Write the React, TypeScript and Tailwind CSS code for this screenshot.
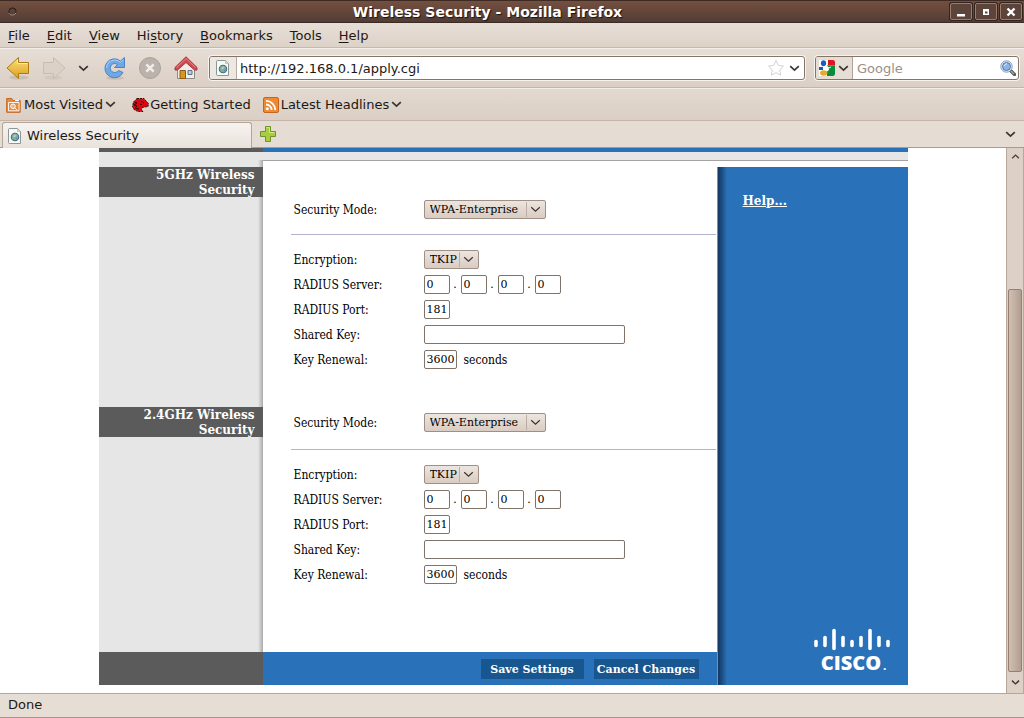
import React from "react";

const SERIF = "font-['DejaVu_Serif',serif]";
const SERIF_NARROW = "font-['DejaVu_Serif_Condensed','DejaVu_Serif',serif]";
const SANS = "font-['DejaVu_Sans',sans-serif]";

function Chevron({ up = false, thin = false, className = "text-[#3c3430]" }: { up?: boolean; thin?: boolean; className?: string }) {
  return (
    <svg width="11" height="7" viewBox="0 0 11 7" className={className} fill="none" stroke="currentColor" strokeWidth={thin ? 1.2 : 1.7} aria-hidden="true">
      <path d={up ? "M1.5 5.5 5.5 1.8 9.5 5.5" : "M1.2 1.2 5.5 5.2 9.8 1.2"} />
    </svg>
  );
}

function PageIcon() {
  return (
    <svg width="14" height="16" viewBox="0 0 14 16" className="shrink-0" aria-hidden="true">
      <path d="M1.5.5h8l3 3v12h-11q-1 0-1-1v-13q0-1 1-1z" fill="#f7f8f7" stroke="#8a9794" />
      <path d="M9.5.5v3h3z" fill="#d3dbd9" stroke="#a8b2b0" strokeWidth=".6" />
      <circle cx="7" cy="9" r="3.7" fill="#7fae9f" stroke="#4a6b80" strokeWidth="1.1" />
      <path d="M5 8q2-2.5 3.4-1L7.3 9.3 5.5 9z" fill="#a9d0aa" />
      <path d="M7.5 10l2-.8-.8 2.4z" fill="#5c86b0" />
    </svg>
  );
}

function TitleBar() {
  const box = "flex h-[17px] w-[22px] items-center justify-center rounded-[2px] border border-[#9b7c6d] bg-[#5c443a] shadow-[0_0_0_1px_#35241e]";
  return (
    <header className="flex h-[23px] items-center border-t border-b border-t-[#3f2923] border-b-[#3b2b25] bg-linear-to-b from-[#73503f] via-[#64463b] to-[#513d35] pr-[2px] pl-2">
      <svg width="9" height="9" viewBox="0 0 9 9" aria-hidden="true">
        <circle cx="4.5" cy="4.5" r="3.6" fill="#594239" stroke="#2c1c17" />
        <path d="M1 6.2a4 4 0 0 0 7-.3" fill="none" stroke="#b3998c" />
      </svg>
      <h1 className="flex-1 pl-2 text-center text-[14px] leading-[18px] font-bold text-white [text-shadow:1px_1px_1px_#20120c]">Wireless Security - Mozilla Firefox</h1>
      <div className="flex gap-[3px]">
        <button aria-label="Minimize" className={box}>
          <svg width="12" height="12" viewBox="0 0 12 12"><path d="M2 8h8v2.5H2z" fill="#fff" /></svg>
        </button>
        <button aria-label="Maximize" className={box}>
          <svg width="12" height="12" viewBox="0 0 12 12"><path d="M3 3h6v6H3zM5 5.5v2h2.500v-2z" fill="#fff" fillRule="evenodd" /></svg>
        </button>
        <button aria-label="Close" className={box}>
          <svg width="12" height="12" viewBox="0 0 12 12"><path d="m2.500 2.500 7 7m0-7-7 7" stroke="#fff" strokeWidth="2.400" /></svg>
        </button>
      </div>
    </header>
  );
}

const MENUS = [
  ["", "F", "ile"],
  ["", "E", "dit"],
  ["", "V", "iew"],
  ["Hi", "s", "tory"],
  ["", "B", "ookmarks"],
  ["", "T", "ools"],
  ["", "H", "elp"],
];

function MenuBar() {
  return (
    <nav className="flex h-[25px] items-center gap-[17px] border-b border-[#c9b9ad] bg-linear-to-b from-[#e7dfd7] to-[#ddd2c8] px-2 pt-px text-[13px]">
      {MENUS.map(([pre, key, post]) => (
        <button key={pre + key + post} className="leading-[18px]">
          {pre}<span className="underline underline-offset-2">{key}</span>{post}
        </button>
      ))}
    </nav>
  );
}

function BackIcon() {
  return (
    <svg width="24" height="24" viewBox="0 0 24 24">
      <ellipse cx="13" cy="21.500" rx="10" ry="2" fill="#b7a99d" opacity=".5" />
      <defs><linearGradient id="gold" x1="0" y1="0" x2="0" y2="1"><stop offset="0" stopColor="#fbe27d" /><stop offset="1" stopColor="#dc9e1b" /></linearGradient></defs>
      <path d="M12.500 1.500v5h10v11h-10v5L1 12z" fill="url(#gold)" stroke="#ae7b13" strokeLinejoin="round" />
      <path d="M11.500 4v3.500h10" fill="none" stroke="#fff2b0" opacity=".8" />
    </svg>
  );
}

function ForwardIcon() {
  return (
    <svg width="24" height="24" viewBox="0 0 24 24">
      <ellipse cx="11" cy="21.500" rx="9" ry="2" fill="#c6b9ae" opacity=".4" />
      <path d="M11.500 1.500v5h-10v11h10v5L23 12z" fill="#dbd1c7" stroke="#c6bcb1" strokeLinejoin="round" />
    </svg>
  );
}

function ReloadIcon() {
  return (
    <svg width="24" height="24" viewBox="0 0 24 24">
      <ellipse cx="12" cy="22" rx="9" ry="1.800" fill="#b7a99d" opacity=".5" />
      <path d="M20 16.500A9.500 9.500 0 1 1 17.500 5L21.500 1.500V11.500H11.500L14.500 8.500A4.500 4.500 0 1 0 15.500 14.500z" fill="#6fa8e4" stroke="#4a84c6" strokeLinejoin="round" />
      <path d="M3.500 12q.5-7.500 8.500-8 3 0 5.500 2.300l3-2.500" fill="none" stroke="#a9cff5" />
    </svg>
  );
}

function StopIcon() {
  return (
    <svg width="24" height="24" viewBox="0 0 24 24">
      <circle cx="12" cy="12" r="10.500" fill="#bab2ab" stroke="#aaa29b" />
      <path d="m8.300 8.300 7.400 7.400m0-7.400-7.400 7.400" stroke="#f0ece8" strokeWidth="2.600" />
    </svg>
  );
}

function HomeIcon() {
  return (
    <svg width="24" height="24" viewBox="0 0 24 24">
      <path d="M3.500 11.500 12 4l8.500 7.500v11h-17z" fill="#efeeea" stroke="#8d8a84" />
      <path d="M6 14.500h5.500v8H6z" fill="#d9961f" stroke="#8f5a14" />
      <path d="M14 14.500h4v4h-4z" fill="#b9cfe4" stroke="#5b6f86" />
      <path d="M12 .8 23 11.500v2.500h-2.500L12 6.500 3.500 14H1v-2.500z" fill="#d04a50" stroke="#a8343a" strokeLinejoin="round" />
      <path d="M2.500 11.500 12 2.500l9.500 9" fill="none" stroke="#e98488" />
    </svg>
  );
}

function GoogleIcon() {
  return (
    <svg width="16" height="16" viewBox="0 0 16 16" aria-hidden="true">
      <path d="M0 0h16v16H0z" fill="#fff" />
      <path d="M9 0h5q2 0 2 2v3.500H9z" fill="#e1141c" />
      <path d="M8 5.500h8V14q0 2-2 2H8z" fill="#098b3c" />
      <path d="M0 7h4v3H0z" fill="#1560b8" />
      <ellipse cx="4.500" cy="3.200" rx="2.600" ry="3" fill="#1560b8" />
      <path d="M5 6q3-1 4.500 1.500T8 11.500Q4 11 4 9z" fill="#fff" />
      <ellipse cx="4.700" cy="13" rx="3.700" ry="2.700" fill="#e6ab2c" />
      <path d="m7 6 3 2 2-1" stroke="#fff" fill="none" />
    </svg>
  );
}

function NavBar() {
  const field = "flex h-6 items-center overflow-hidden rounded-[3px] border border-[#84756a] bg-white shadow-[0_0_0_1px_#f6f2ee]";
  return (
    <div className="flex h-10 items-center border-t border-b border-t-[#f3eeea] border-b-[#c5b5a9] bg-linear-to-b from-[#e6ddd5] to-[#dbcfc5] pr-[5px] pl-[6px]">
      <button aria-label="Back"><BackIcon /></button>
      <button aria-label="Forward" className="ml-3"><ForwardIcon /></button>
      <button aria-label="Recent pages" className="ml-3"><Chevron /></button>
      <button aria-label="Reload" className="ml-[14px]"><ReloadIcon /></button>
      <button aria-label="Stop" className="ml-[11px]"><StopIcon /></button>
      <button aria-label="Home" className="ml-3"><HomeIcon /></button>
      <div className={`${field} ml-[11px] min-w-0 flex-1`}>
        <span className="flex h-full items-center border-r border-[#b9aca1] bg-[#eee8e2] px-[6px]"><PageIcon /></span>
        <input aria-label="Location" defaultValue="http://192.168.0.1/apply.cgi" className="h-full min-w-0 flex-1 px-[3px] text-[13px] outline-none" />
        <svg width="18" height="18" viewBox="0 0 18 18" aria-hidden="true">
          <path d="m9 1.500 2.300 4.900 5.200.7-3.800 3.700.9 5.400L9 13.600l-4.600 2.600.9-5.400L1.500 7.100l5.200-.7z" fill="#fff" stroke="#d2d2d2" />
        </svg>
        <button aria-label="Show history" className="px-1"><Chevron /></button>
      </div>
      <div className={`${field} ml-[10px] w-[204px]`}>
        <button aria-label="Search engine" className="flex h-full items-center gap-[3px] border-r border-[#b0a298] bg-[#e6ddd5] px-[3px]"><GoogleIcon /><Chevron /></button>
        <input aria-label="Search" placeholder="Google" className="h-full min-w-0 flex-1 px-1 text-[13px] outline-none placeholder:text-[#9c9087]" />
        <button aria-label="Go" className="pr-[2px]">
          <svg width="16" height="16" viewBox="0 0 16 16">
            <path d="m10 10 4.500 4.500" stroke="#555" strokeWidth="3.200" strokeLinecap="round" />
            <path d="m11 11 3 3" stroke="#aaa" strokeWidth="1.200" />
            <circle cx="6.500" cy="6.500" r="5.700" fill="#e8eef5" stroke="#8b99ac" />
            <circle cx="6.500" cy="6.500" r="4" fill="#8cb5e6" stroke="#4a78b4" />
            <path d="M4 6q.5-2 3-2.300" stroke="#dcecff" fill="none" />
          </svg>
        </button>
      </div>
    </div>
  );
}

function Bookmarks() {
  return (
    <div className="flex h-[33px] items-center gap-4 border-t border-b border-t-[#f3eeea] border-b-[#c5b5a9] bg-linear-to-b from-[#e3d9d0] to-[#dbcfc5] pl-[6px] text-[13px]">
      <button className="flex items-center gap-[3px]">
        <svg width="15" height="16" viewBox="0 0 15 16" aria-hidden="true">
          <path d="M.7 1.500h5l1.500 2h7v11.800H.7z" fill="#e88b3d" stroke="#c5651b" />
          <path d="M2.500 5.500h10.500v8.300H2.500z" fill="none" stroke="#fff" strokeWidth=".9" />
          <circle cx="7" cy="9.300" r="2.300" fill="#f3b27b" stroke="#fff" />
          <path d="m8.800 11 2.500 2.300M9 3.500h4" stroke="#fff" />
        </svg>
        <span className="flex items-center gap-[2px]">Most Visited<Chevron /></span>
      </button>
      <button className="flex items-center gap-px">
        <svg width="17" height="14" viewBox="0 0 17 14" aria-hidden="true">
          <path d="M5 .5h7l2 2.500 2.500 2.500-.5 3-3 .5-3 .5-.5 2 1.500 2H6L2 11.500.5 8.500 1.500 4z" fill="#dc0810" stroke="#36090a" strokeDasharray="2 1" />
          <path d="m2 4 3 1-3 2 3 1-2 2 4 1M9 3l3 2M8 6l2 1" fill="none" stroke="#35090a" />
        </svg>
        Getting Started
      </button>
      <button className="-ml-1 flex items-center gap-[2px]">
        <svg width="16" height="16" viewBox="0 0 16 16" aria-hidden="true">
          <rect x=".5" y=".5" width="15" height="15" rx="1.500" fill="#ee8a32" stroke="#c6651d" />
          <circle cx="4.300" cy="11.800" r="1.500" fill="#fff" />
          <path d="M3 7.500a5.500 5.500 0 0 1 5.600 5.600M3 3.800a9.300 9.300 0 0 1 9.300 9.300" stroke="#fff" strokeWidth="1.800" fill="none" />
        </svg>
        <span className="flex items-center gap-[2px]">Latest Headlines<Chevron /></span>
      </button>
    </div>
  );
}

function TabStrip() {
  return (
    <div className="flex h-[27px] items-stretch border-b border-[#ab9b8f] bg-[#e5dcd4] pl-[2px]">
      <button className="mt-px -mb-px flex w-[250px] items-center gap-[5px] rounded-t-[3px] border border-b-0 border-[#b5a498] bg-linear-to-b from-[#f6f3f0] to-[#e9e2db] pl-[5px] text-[13px]">
        <PageIcon />Wireless Security
      </button>
      <button aria-label="New tab" className="ml-2">
        <svg width="16" height="16" viewBox="0 0 16 16"><path d="M5.500.5h5v5h5v5h-5v5h-5v-5h-5v-5h5z" fill="#a8cd3f" stroke="#71922a" /><path d="M6.500 1.500h3v5h5" fill="none" stroke="#d3e88c" /></svg>
      </button>
      <button aria-label="List all tabs" className="mr-2 ml-auto"><Chevron /></button>
    </div>
  );
}

function Row({ label, htmlFor, children }: { label: string; htmlFor: string; children: React.ReactNode }) {
  return (
    <div className="flex h-[25px] items-center pl-[3px]">
      <label htmlFor={htmlFor} className={`w-[130px] shrink-0 pt-px text-[12px] ${SERIF_NARROW}`}>{label}</label>
      {children}
    </div>
  );
}

function Select({ id, options, width }: { id: string; options: string[]; width: string }) {
  return (
    <span className={`relative flex h-[19px] ${width}`}>
      <select id={id} className="h-full w-full appearance-none rounded-[2px] border border-[#a08f84] bg-linear-to-b from-[#ece5df] to-[#d9ccc2] pl-[5px] text-[11px] leading-[16px] outline-none">
        {options.map((o) => <option key={o}>{o}</option>)}
      </select>
      <span className="pointer-events-none absolute inset-y-[2px] right-[2px] flex w-[18px] items-center justify-center border-l border-[#bcaea3]"><Chevron thin /></span>
    </span>
  );
}

const INPUT = "h-[19px] rounded-[2px] border border-[#80736a] bg-white pl-[2px] text-[11px] leading-[16px] outline-none";

function Settings({ id, spacing, divider }: { id: string; spacing: string; divider: string }) {
  return (
    <section className={`bg-white pl-7 text-[11px] leading-[15px] text-black ${spacing}`}>
      <Row label="Security Mode:" htmlFor={`${id}-mode`}>
        <Select id={`${id}-mode`} width="w-[122px]" options={["WPA-Enterprise", "WPA-Personal", "Disabled"]} />
      </Row>
      <hr className={`mr-px mb-3 border-0 border-t border-[#b3b3cf] ${divider}`} />
      <Row label="Encryption:" htmlFor={`${id}-enc`}>
        <Select id={`${id}-enc`} width="w-[55px]" options={["TKIP", "AES"]} />
      </Row>
      <Row label="RADIUS Server:" htmlFor={`${id}-ip0`}>
        {[0, 1, 2, 3].map((n) => (
          <React.Fragment key={n}>
            {n > 0 && <span className="w-[11px] text-center">.</span>}
            <input id={`${id}-ip${n}`} aria-label={`RADIUS server octet ${n + 1}`} defaultValue="0" className={`${INPUT} w-[26px]`} />
          </React.Fragment>
        ))}
      </Row>
      <Row label="RADIUS Port:" htmlFor={`${id}-port`}>
        <input id={`${id}-port`} defaultValue="181" className={`${INPUT} w-[26px]`} />
      </Row>
      <Row label="Shared Key:" htmlFor={`${id}-key`}>
        <input id={`${id}-key`} className={`${INPUT} w-[201px]`} />
      </Row>
      <Row label="Key Renewal:" htmlFor={`${id}-renew`}>
        <input id={`${id}-renew`} defaultValue="3600" className={`${INPUT} w-[33px]`} />
        <span className={`pt-px pl-[7px] text-[12px] ${SERIF_NARROW}`}>seconds</span>
      </Row>
    </section>
  );
}

function SideHeading({ children }: { children: React.ReactNode }) {
  return (
    <div className="bg-linear-to-r from-[#e6e6e6] from-97% to-[#aaaaaa]">
      <h2 className="h-[30px] bg-[#5b5b5b] pt-px pr-2 pl-8 text-right text-[12px] leading-[15px] font-bold text-white">{children}</h2>
    </div>
  );
}

const BARS: [number, number, number][] = [
  [2, 12, 19], [11, 8, 19], [20, 1, 22], [29, 8, 19], [38, 12, 19], [47, 8, 19], [56, 1, 22], [65, 8, 19], [74, 12, 19],
];

function CiscoLogo() {
  return (
    <div className="flex w-[76px] flex-col items-center text-white">
      <svg width="76" height="23" viewBox="0 0 76 23" aria-hidden="true">
        {BARS.map(([x, a, b]) => (
          <path key={x} d={`M${x} ${a + 1.5}V${b - 1.5}`} stroke="currentColor" strokeWidth="3.6" strokeLinecap="round" />
        ))}
      </svg>
      <span className="flex items-end pl-1 font-['Open_Sans',sans-serif] text-[20px] leading-[24px] font-extrabold">CISCO<span className="pl-[2px] text-[10px] leading-[18px]">.</span></span>
    </div>
  );
}

function RouterPage() {
  const action = "h-5 bg-[#17568f] pt-px text-[11px] leading-[15px] font-bold text-white";
  return (
    <main className={`mx-auto w-full max-w-[809px] ${SERIF}`}>
      <div className="grid grid-cols-[164px_1fr]">
        <div className="h-1 bg-[#5b5b5b]" />
        <div className="h-1 bg-[#2971b9]" />
      </div>
      <div className="h-2 bg-[#e6e6e6]" />
      <div className="grid grid-cols-[164px_1fr]">
        <div className="h-[7px] bg-linear-to-r from-[#e6e6e6] from-97% to-[#aaaaaa]" />
        <div className="h-[7px] border-t border-[#a3a3a3] bg-white" />
      </div>
      <div className="flex">
        <div className="grid min-w-0 flex-1 grid-cols-[164px_1fr]">
          <SideHeading>5GHz Wireless Security</SideHeading>
          <Settings id="a" spacing="pt-[30px] pb-[35px]" divider="mt-3" />
          <SideHeading>2.4GHz Wireless Security</SideHeading>
          <Settings id="b" spacing="pt-[3px] pb-[65px]" divider="mt-[14px]" />
          <div className="bg-[#5b5b5b]" />
          <footer className="flex h-[33px] items-center justify-end gap-[10px] bg-[#2971b9] pr-[18px]">
            <button className={`${action} w-[103px]`}>Save Settings</button>
            <button className={`${action} w-[105px]`}>Cancel Changes</button>
          </footer>
        </div>
        <aside className="flex w-[191px] flex-col border-l border-[#7f8fa0] bg-[#2971b9] bg-linear-to-r from-[#143560] to-[#2971b9] to-[9px] pt-[27px] pr-[18px] pb-[10px] pl-[25px]">
          <a href="#help" className="self-start text-[12px] leading-[15px] font-bold text-white underline">Help...</a>
          <div className="mt-auto flex justify-end"><CiscoLogo /></div>
        </aside>
      </div>
    </main>
  );
}

function ScrollBar() {
  return (
    <div className="flex w-[18px] shrink-0 flex-col items-center border-x border-[#b8a79b] bg-[#dcd0c7]">
      <button aria-label="Scroll up" className="flex h-[17px] items-center"><Chevron up className="w-[9px] text-[#4a403a]" /></button>
      <div className="flex w-full flex-1 flex-col px-px">
        <div className="grow-[124]" />
        <div className="grow-[382] rounded-[2px] border border-[#967f71] bg-linear-to-r from-[#cfbfb3] to-[#b39f91]" />
      </div>
      <button aria-label="Scroll down" className="flex h-[21px] items-center"><Chevron className="w-[9px] text-[#3c3430]" /></button>
    </div>
  );
}

export default function App() {
  return (
    <div className={`flex min-h-screen flex-col bg-white text-[#1c1815] ${SANS}`}>
      <TitleBar />
      <MenuBar />
      <NavBar />
      <Bookmarks />
      <TabStrip />
      <div className="flex flex-1">
        <div className="min-w-0 flex-1"><RouterPage /></div>
        <ScrollBar />
      </div>
      <div role="status" className="h-[25px] border-t border-b border-t-[#b5a59a] border-b-[#a5958a] bg-[#e6ddd4] px-2 text-[13px] leading-[21px]">Done</div>
    </div>
  );
}
